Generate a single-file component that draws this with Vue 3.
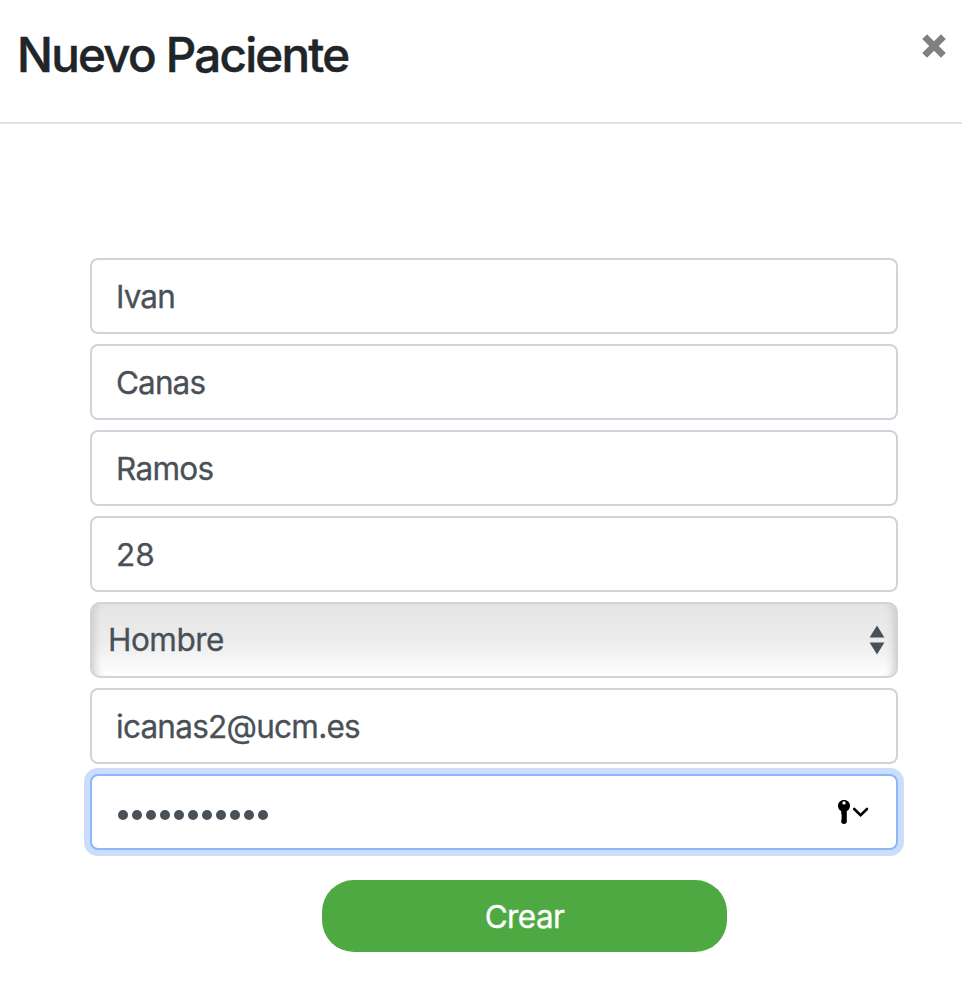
<script setup>
import { reactive } from 'vue'

const form = reactive({
  nombre: 'Ivan',
  apellido1: 'Canas',
  apellido2: 'Ramos',
  edad: '28',
  sexo: 'Hombre',
  email: 'icanas2@ucm.es',
})
const names = ['nombre', 'apellido1', 'apellido2', 'edad']
const passwordLength = 11
</script>

<template>
  <div class="modal">
    <header class="modal-header">
      <h1 class="title">Nuevo Paciente</h1>
      <button class="close" type="button">
        <svg width="26" height="26" viewBox="0 0 26 26">
          <path d="M3.6 3.6L22.4 22.4M22.4 3.6L3.6 22.4" stroke="#808080" stroke-width="6.8" fill="none" />
        </svg>
      </button>
    </header>
    <form class="form" @submit.prevent>
      <input v-for="n in names" :key="n" v-model="form[n]" :class="['field', n]" type="text" />
      <div class="select-wrap">
        <select v-model="form.sexo" class="field select">
          <option>Hombre</option>
        </select>
        <svg class="arrows" width="16" height="30" viewBox="0 0 16 30">
          <path d="M8 .5L15.4 12.5H.6ZM8 29.5L15.4 17.5H.6Z" fill="#495057" />
        </svg>
      </div>
      <input v-model="form.email" class="field email" type="text" />
      <div class="field password" tabindex="0">
        <span class="dots">
          <i v-for="d in passwordLength" :key="d" class="dot"></i>
        </span>
        <svg class="key" width="32" height="26" viewBox="0 0 32 26">
          <path fill-rule="evenodd" d="M7 1C10.6 1 13 3.5 13 6.7C13 9.2 11.7 11.1 9.8 12V22.3Q9.8 25 7 25Q4.2 25 4.2 22.3V21L5 20L4.2 19L5 18L4.2 17L5 16L4.2 15V12C2.3 11.1 1 9.2 1 6.7C1 3.5 3.4 1 7 1ZM7 2.2A1.7 1.7 0 1 0 7 5.6A1.7 1.7 0 1 0 7 2.2Z" fill="#000" />
          <path d="M17.2 10L23.6 16.2L30 10" fill="none" stroke="#000" stroke-width="2.6" stroke-linecap="round" />
        </svg>
      </div>
      <button class="submit" type="submit">Crear</button>
    </form>
  </div>
</template>

<style>
body {
  background: #fff;
}
</style>

<style scoped>
.modal {
  box-sizing: border-box;
  height: 990px;
  overflow: hidden;
  font-family: Inter, "Liberation Sans", sans-serif;
  color: #212529;
}
.modal * {
  box-sizing: border-box;
}
.modal-header {
  display: flex;
  justify-content: space-between;
  align-items: flex-start;
  height: 124px;
  padding: 20px 16px 0 17px;
  border-bottom: 2px solid #dee2e6;
}
.title {
  margin: 0;
  font-size: 47.5px;
  line-height: 69px;
  font-weight: 500;
  letter-spacing: -1.75px;
  white-space: nowrap;
  -webkit-text-stroke: 0.5px #212529;
}
.close {
  display: flex;
  margin: 13px -0.5px 0 0;
  padding: 0;
  border: 0;
  background: none;
}
.form {
  display: flex;
  flex-direction: column;
  gap: 10px;
  padding: 134px 64px 0 90px;
}
.field {
  display: block;
  width: 100%;
  height: 76px;
  margin: 0;
  padding: 0 24px;
  border: 2px solid #ced4da;
  border-radius: 8px;
  background: #fff;
  color: #495057;
  font-family: inherit;
  font-size: 31.5px;
  letter-spacing: -0.9px;
  outline: none;
  -webkit-text-stroke: 0.3px #495057;
}
.apellido2 {
  letter-spacing: -0.7px;
}
.edad {
  letter-spacing: 0;
}
.email {
  letter-spacing: -0.75px;
}
.select-wrap {
  position: relative;
}
.select {
  appearance: none;
  padding: 0 16px 2px;
  border-radius: 10px;
  background: linear-gradient(#e5e5e5, #ececec 48%, #f1f1f1 65%, #fff);
  box-shadow: inset 10px 0 8px -8px #c8c8c8, inset -10px 0 8px -8px #c8c8c8;
  letter-spacing: -0.5px;
}
.arrows {
  position: absolute;
  right: 13px;
  top: 23px;
}
.password {
  display: flex;
  align-items: center;
  justify-content: space-between;
  border-color: #8bb8f8;
  box-shadow: 0 0 0 6px #ccddfc;
}
.dots {
  display: flex;
  gap: 4.05px;
  margin: 6px 0 0 2px;
}
.dot {
  width: 10px;
  height: 10px;
  border-radius: 50%;
  background: #495057;
}
.key {
  margin: 0 3px 0 0;
}
.submit {
  width: 405px;
  height: 72px;
  margin: 20px 0 0 232px;
  padding: 0;
  border: 0;
  border-radius: 32px;
  background: #4ea943;
  color: #fff;
  font-family: inherit;
  font-size: 31.5px;
  letter-spacing: -0.6px;
  -webkit-text-stroke: 0.3px #fff;
}
</style>
